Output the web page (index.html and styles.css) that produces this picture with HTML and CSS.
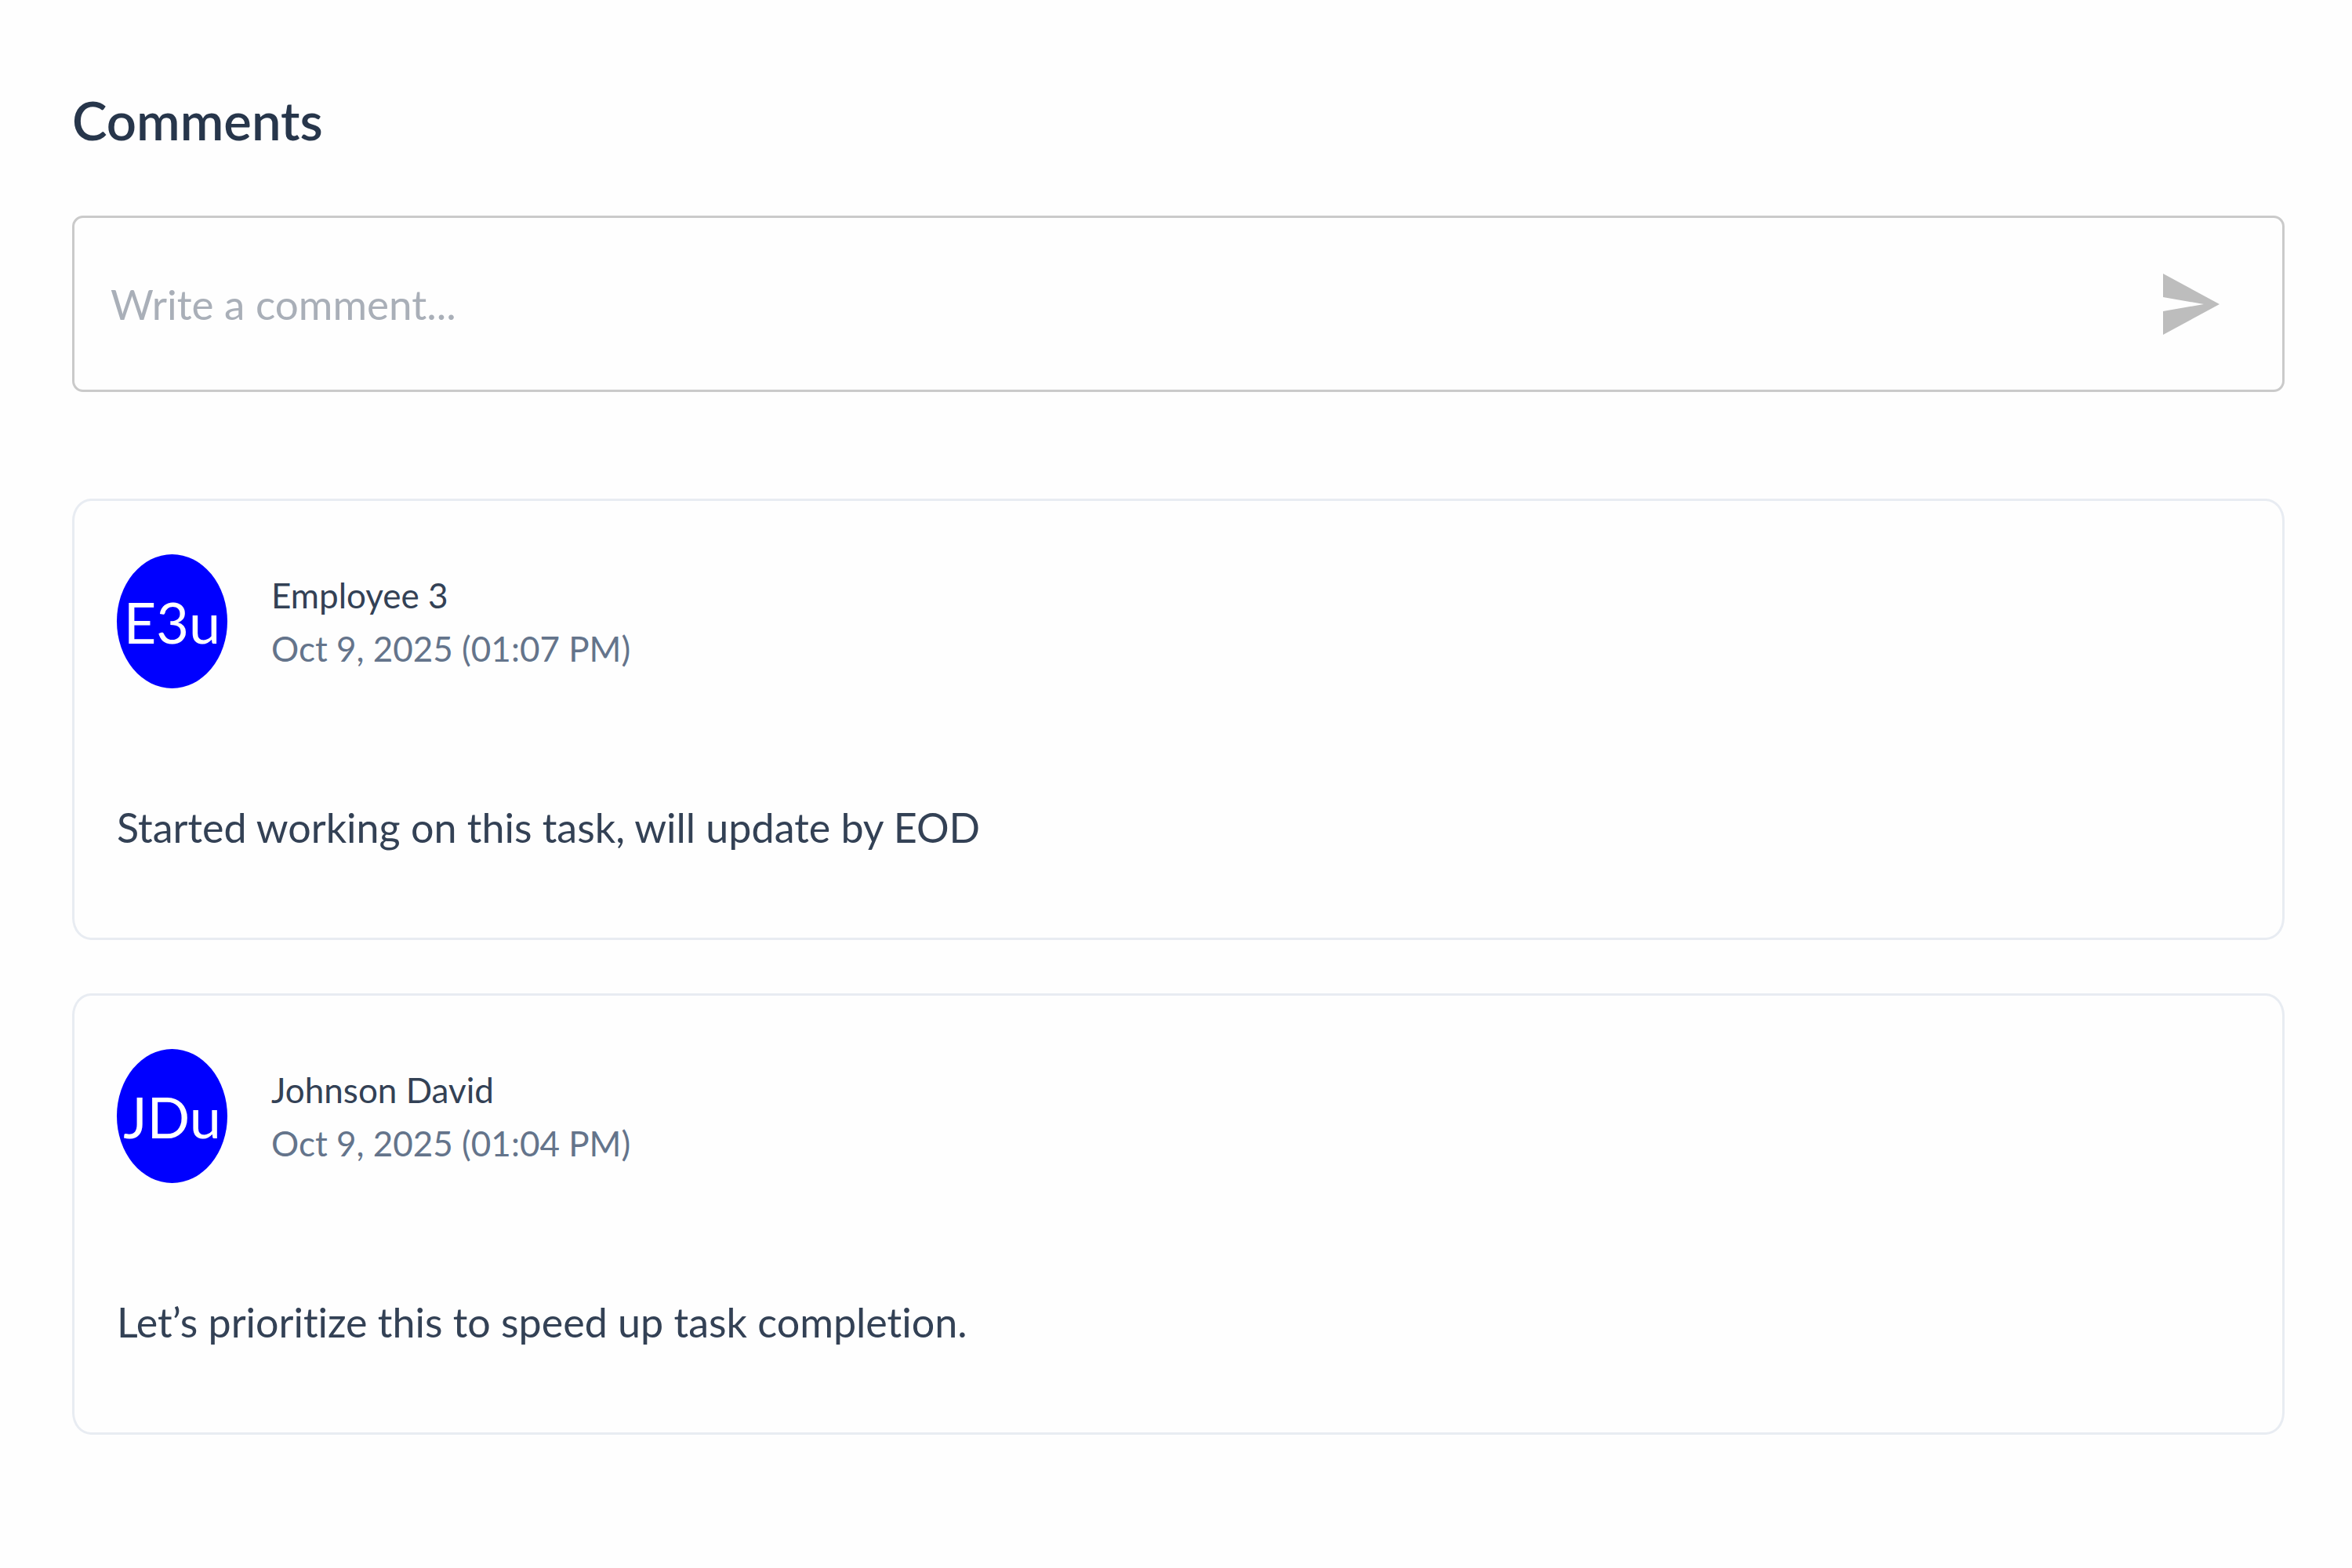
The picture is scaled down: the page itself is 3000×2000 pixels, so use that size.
FILE: index.html
```html
<!DOCTYPE html>
<html lang="en">
<head>
  <meta charset="UTF-8">
  <meta name="viewport" content="width=device-width, initial-scale=1.0">
  <title>Comments</title>
  <link rel="stylesheet" href="styles.css">
</head>
<body>
  <main class="comments">
    <h2 class="comments-title">Comments</h2>

    <!-- New comment -->
    <form class="comment-form">
      <input type="text" class="comment-input" aria-label="Write a comment" placeholder="Write a comment...">
      <button type="submit" class="send-button" aria-label="Send">
        <svg class="send-icon" viewBox="0 0 72 78" preserveAspectRatio="none">
          <path d="M0 0 L72 39 L0 78 V48 L52 39 L0 30 Z" fill="currentColor"/>
        </svg>
      </button>
    </form>

    <!-- Comment list -->
    <div class="comment-list">
      <article class="comment-card">
        <header class="comment-header">
          <div class="avatar">E3u</div>
          <div class="comment-meta">
            <div class="comment-author">Employee 3</div>
            <div class="comment-date">Oct 9, 2025 (01:07 PM)</div>
          </div>
        </header>
        <p class="comment-text">Started working on this task, will update by EOD</p>
      </article>

      <article class="comment-card">
        <header class="comment-header">
          <div class="avatar">JDu</div>
          <div class="comment-meta">
            <div class="comment-author">Johnson David</div>
            <div class="comment-date">Oct 9, 2025 (01:04 PM)</div>
          </div>
        </header>
        <p class="comment-text">Let’s prioritize this to speed up task completion.</p>
      </article>
    </div>
  </main>
</body>
</html>
```

FILE: styles.css
```css
* {
  box-sizing: border-box;
}
body {
  margin: 0;
  font-family: Lato, "Open Sans", sans-serif;
  font-variant-ligatures: none;
  background-color: #fefefe;
  color: #334155;
}
.comments {
  padding: 107px 86px 107px 92px;
}
.comments-title {
  margin: 0 0 76px;
  font-size: 67px;
  font-weight: 600;
  line-height: 92px;
  color: #27364b;
}

/* New comment */
.comment-form {
  display: flex;
  align-items: center;
  padding: 56px 80px 56px 46px;
  margin-bottom: 136px;
  border: 3px solid #cacaca;
  border-radius: 14px;
}
.comment-input {
  flex: 1;
  min-width: 0;
  height: 107px;
  padding: 0;
  border: none;
  outline: none;
  background: none;
  font-family: inherit;
  font-size: 53px;
  color: #334155;
}
.comment-input::placeholder {
  color: #a9afb8;
  opacity: 1;
}
.send-button {
  display: flex;
  padding: 0;
  border: none;
  background: none;
  color: #bdbdbd;
  cursor: pointer;
}
.send-icon {
  width: 72px;
  height: 78px;
}

/* Comment list */
.comment-list {
  display: flex;
  flex-direction: column;
  gap: 68px;
}
.comment-card {
  padding: 68px 54px 95px;
  border: 3px solid #e8ecf2;
  border-radius: 24px / 28px;
}
.comment-header {
  display: flex;
  align-items: center;
  gap: 56px;
  margin-bottom: 131px;
}
.avatar {
  display: flex;
  align-items: center;
  justify-content: center;
  width: 141px;
  height: 171px;
  border-radius: 50%;
  background-color: #0000ff;
  color: white;
  font-size: 72px;
}
.comment-meta {
  font-size: 44px;
  line-height: 68px;
}
.comment-date {
  color: #64748b;
}
.comment-text {
  margin: 0;
  font-size: 52px;
  line-height: 92px;
}
```
